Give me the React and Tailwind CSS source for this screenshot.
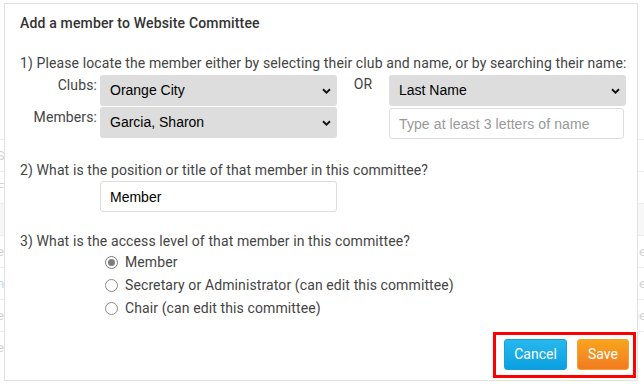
import React from "react";

function Chevron() {
  return (
    <svg
      className="pointer-events-none absolute right-[6px] top-1/2 -translate-y-1/2"
      width="9"
      height="6"
      viewBox="0 0 9 6"
    >
      <path d="M1 1.2 L4.5 4.6 L8 1.2" fill="none" stroke="#111" strokeWidth="1.9" />
    </svg>
  );
}

function Select({ value }) {
  return (
    <div className="relative h-[31px] w-[237px]">
      <select
        defaultValue={value}
        className="h-full w-full appearance-none rounded-[3px] border-0 bg-[#dddddd] pl-[10px] text-[14px] tracking-normal text-black outline-none"
        style={{ fontFamily: '"Liberation Sans", Arial, sans-serif' }}
      >
        <option>{value}</option>
      </select>
      <Chevron />
    </div>
  );
}

function Radio({ checked, label }) {
  return (
    <div className="flex h-[23px] items-center pl-[85px]">
      <span
        className={
          "flex h-[13px] w-[13px] items-center justify-center rounded-full border bg-white " +
          (checked ? "border-[#7a7a7a]" : "border-[#8a8a8a]")
        }
      >
        {checked && <span className="h-[7px] w-[7px] rounded-full bg-[#7d7d7d]" />}
      </span>
      <span className="ml-[7px] text-[14px] text-[#444]">{label}</span>
    </div>
  );
}

export default function App() {
  const bgRows = [
    { l: "S", r: "" },
    { l: "Fi", r: "" },
    { l: "", r: "", band: true },
    { l: "e", r: "e" },
    { l: "n", r: "e", blue: true },
    { l: "e", r: "ie" },
    { l: "e", r: "" },
  ];
  return (
    <div
      className="relative h-[389px] w-[644px] overflow-hidden bg-white"
      style={{ fontFamily: 'Roboto, "Noto Sans", sans-serif' }}
    >
      {/* page underneath */}
      <div className="mt-[-13px] pl-[0px] text-[16px] leading-[16px] text-[#dedede]">
        e Committee
      </div>
      <div className="mt-[136px] flex flex-col text-[13px] text-[#d4d4d4]">
        {bgRows.map((r, i) => (
          <div
            key={i}
            className={
              "flex h-[32px] items-center justify-between border-t border-[#ededed] " +
              (r.band ? "bg-[#f7f7f7]" : "")
            }
          >
            <span className={"ml-[-3px] " + (r.blue ? "text-[#b7dcef]" : "")}>{r.l}</span>
            <span className="mr-[-2px]">{r.r}</span>
          </div>
        ))}
      </div>

      {/* dialog */}
      <div className="absolute left-[4px] top-[3px] flex h-[378px] w-[634px] flex-col border border-[#e2e2e2] bg-white px-[15px] pt-[9px] tracking-[0.11px]">
        <div className="text-[14px] font-medium leading-[20px] tracking-[0.16px] text-[#333]">
          Add a member to Website Committee
        </div>

        <div className="mt-[20px] whitespace-nowrap text-[14px] leading-[20px] text-[#444]">
          1) Please locate the member either by selecting their club and name, or by searching their name:
        </div>

        <div className="mt-[2px] grid grid-cols-[80px_237px_52px_237px] gap-y-[1px] text-[14px] text-[#444]">
          <div className="pr-[3px] text-right leading-[20px]">Clubs:</div>
          <Select value="Orange City" />
          <div className="pt-0 text-center leading-[18px]">OR</div>
          <Select value="Last Name" />

          <div className="pr-[3px] text-right leading-[20px]">Members:</div>
          <Select value="Garcia, Sharon" />
          <div />
          <input
            placeholder="Type at least 3 letters of name"
            className="mt-[1px] h-[31px] w-[235px] rounded-[3px] border border-[#dddddd] bg-white pl-[9px] text-[14px] tracking-[0.1px] text-black outline-none placeholder:text-[#999]"
            style={{ fontFamily: '"Liberation Sans", Arial, sans-serif' }}
          />
        </div>

        <div className="mt-[21px] text-[14px] leading-[20px] text-[#444]">
          2) What is the position or title of that member in this committee?
        </div>
        <input
          defaultValue="Member"
          className="ml-[80px] mt-[1px] h-[31px] w-[237px] rounded-[3px] border border-[#dddddd] bg-white pl-[9px] text-[14px] tracking-normal text-black outline-none"
          style={{ fontFamily: '"Liberation Sans", Arial, sans-serif' }}
        />

        <div className="mt-[19px] text-[14px] leading-[20px] text-[#444]">
          3) What is the access level of that member in this committee?
        </div>
        <div className="flex flex-col">
          <Radio checked label="Member" />
          <Radio label="Secretary or Administrator (can edit this committee)" />
          <Radio label="Chair (can edit this committee)" />
        </div>

        <div className="mt-[12px] mr-[-14px] flex justify-end">
          <div className="flex gap-[10px] border-[3px] border-[#ff0000] pb-[5px] pl-[8px] pr-[4px] pt-[4px]">
            <button className="h-[31px] w-[63px] rounded-[3px] border border-[#1a9fd8] bg-gradient-to-b from-[#27b8ef] to-[#08a0e0] text-[14px] tracking-normal text-white">
              Cancel
            </button>
            <button className="h-[31px] w-[52px] rounded-[3px] border border-[#f5a030] bg-gradient-to-b from-[#f8a41c] to-[#f27a22] text-[14px] tracking-normal text-white">
              Save
            </button>
          </div>
        </div>
      </div>
    </div>
  );
}
